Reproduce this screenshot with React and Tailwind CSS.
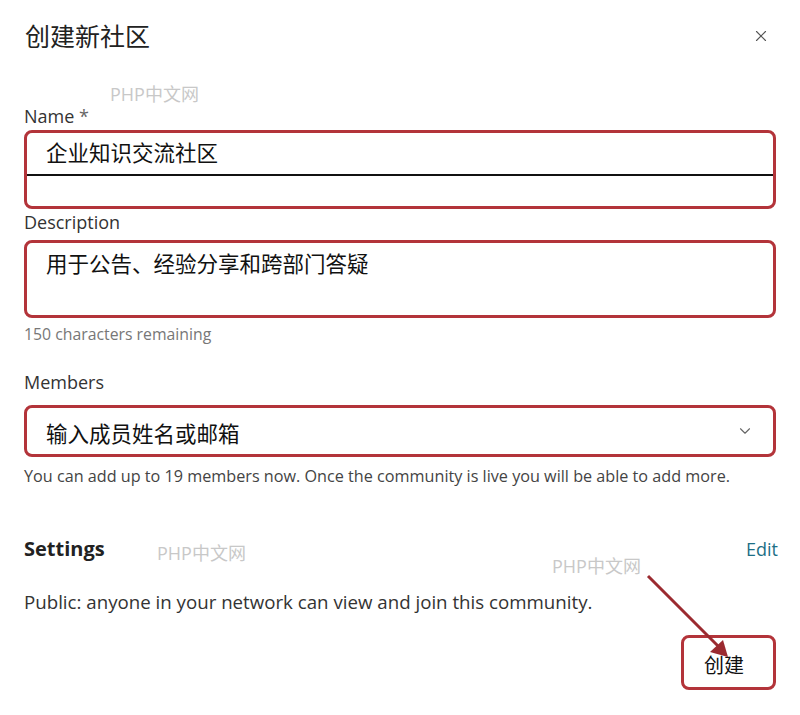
import React from 'react';
import { X, ChevronDown } from 'lucide-react';

const font = { fontFamily: '"Open Sans", "Noto Sans CJK SC", sans-serif' };

// faint site stamp that sits over the form
const Stamp = ({ className }) => (
    <span className={`absolute text-[18px] leading-none text-[#c8c8c8] select-none ${className}`}>PHP中文网</span>
);

const Box = ({ className = '', children }) => (
    <div className={`border-[3px] border-[#b3343a] rounded-[8px] ${className}`}>{children}</div>
);

export default function App() {
    return (
        <div className="relative w-[800px] h-[715px] bg-white text-[#222] overflow-hidden" style={font}>
            <div className="flex flex-col px-[24px]">
                <div className="flex items-center justify-between pt-[14px] h-[58px]">
                    <h1 className="text-[25px] text-[#222] leading-none pl-[1px]">创建新社区</h1>
                    <X className="w-[18px] h-[18px] text-[#555] mr-[6px]" strokeWidth={1.5} />
                </div>

                <label className="mt-[46px] text-[18px] leading-[24px] text-[#333]">Name <span className="text-[#666]">*</span></label>
                <Box className="mt-[2px] h-[79px] flex flex-col">
                    <div className="h-[43px] flex items-center px-[19px] text-[21.5px] text-[#111] border-b-2 border-[#111]">企业知识交流社区</div>
                </Box>

                <label className="mt-[1px] text-[18px] leading-[24px] text-[#333]">Description</label>
                <Box className="mt-[6px] h-[78px] px-[19px] pt-[7px]">
                    <div className="text-[21.5px] leading-[28px] text-[#111]">用于公告、经验分享和跨部门答疑</div>
                </Box>
                <p className="mt-[6px] text-[15.8px] leading-[20px] text-[#777]">150 characters remaining</p>

                <label className="mt-[26px] text-[18px] leading-[24px] text-[#333]">Members</label>
                <Box className="mt-[11px] h-[52px] flex items-center justify-between px-[19px]">
                    <span className="text-[21.5px] text-[#111] pt-[6px]">输入成员姓名或邮箱</span>
                    <ChevronDown className="w-[18px] h-[18px] text-[#666]" strokeWidth={1.5} />
                </Box>
                <p className="mt-[8px] text-[16.2px] leading-[22px] text-[#444]">You can add up to 19 members now. Once the community is live you will be able to add more.</p>

                <div className="mt-[49px] flex items-center justify-between">
                    <h2 className="text-[20px] leading-[26px] font-bold text-[#222]">Settings</h2>
                    <a className="text-[18px] leading-[26px] text-[#1d6f86] mr-[-2px]">Edit</a>
                </div>
                <p className="mt-[28px] text-[18.7px] leading-[24px] text-[#333]">Public: anyone in your network can view and join this community.</p>

                <div className="mt-[21px] flex justify-end">
                    <Box className="w-[95px] h-[55px] flex items-end pl-[20px] pb-[8px]">
                        <span className="text-[20px] leading-[26px] text-[#111]">创建</span>
                    </Box>
                </div>
            </div>

            <Stamp className="left-[110px] top-[85px]" />
            <Stamp className="left-[157px] top-[544px]" />
            <Stamp className="left-[552px] top-[557px]" />

            <svg className="absolute left-0 top-0 pointer-events-none" width="800" height="715">
                <line x1="648" y1="576" x2="722" y2="650" stroke="#9b2a30" strokeWidth="3" />
                <polygon points="728,657 710,652 723,640" fill="#9b2a30" />
            </svg>
        </div>
    );
}
